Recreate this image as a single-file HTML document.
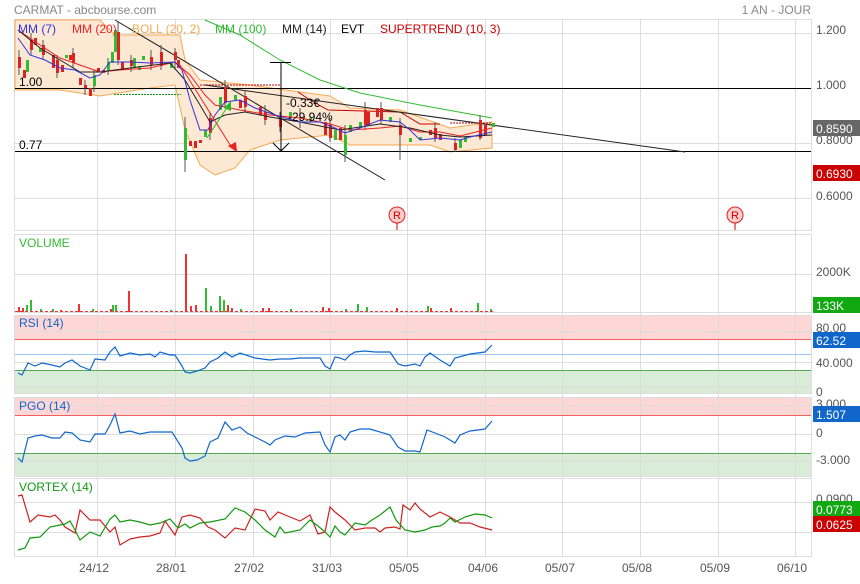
<!DOCTYPE html>
<html><head><meta charset="utf-8"><style>
body{margin:0;background:#fff;width:860px;height:579px;overflow:hidden;font-family:"Liberation Sans",sans-serif}
svg text{font-family:"Liberation Sans",sans-serif}
</style></head><body>
<svg width="860" height="579" viewBox="0 0 860 579" xmlns="http://www.w3.org/2000/svg">
<text x="14" y="14" font-size="12" fill="#888">CARMAT - abcbourse.com</text>
<text x="811" y="14" font-size="12" fill="#888" text-anchor="end">1 AN - JOUR</text>

<g fill="none" stroke="#ddd" stroke-width="1">
<rect x="14.5" y="19.5" width="797" height="211"/>
<rect x="14.5" y="234.5" width="797" height="78"/>
<rect x="14.5" y="315.5" width="797" height="78"/>
<rect x="14.5" y="397.5" width="797" height="79"/>
<rect x="14.5" y="478.5" width="797" height="78"/>
</g>
<rect x="15" y="316" width="796" height="23" fill="#fdd6d6"/>
<rect x="15" y="370" width="796" height="23" fill="#d8ecd8"/>
<rect x="15" y="398" width="796" height="17" fill="#fdd6d6"/>
<rect x="15" y="453" width="796" height="23" fill="#d8ecd8"/>

<g stroke="#ddd" stroke-width="1">
<path d="M97.5 20V557M175.5 20V557M253.5 20V557M330.5 20V557M407.5 20V557M485.5 20V557M562.5 20V557M640.5 20V557M718.5 20V557M795.5 20V557"/>
<path d="M15 33.5H811M15 143.5H811M15 198.5H811M15 274.5H811M15 331.5H811M15 362.5H811M15 386.5H811M15 405.5H811M15 434.5H811M15 461.5H811M15 502.5H811M15 532.5H811"/>
</g>
<line x1="15" y1="339.5" x2="811" y2="339.5" stroke="#f06060"/>
<line x1="15" y1="370.5" x2="811" y2="370.5" stroke="#55aa55"/>
<line x1="15" y1="354.5" x2="811" y2="354.5" stroke="#9cc8f0"/>
<line x1="15" y1="415.5" x2="811" y2="415.5" stroke="#f06060"/>
<line x1="15" y1="453.5" x2="811" y2="453.5" stroke="#55aa55"/>

<path d="M15 20L100 20L115 35L180 35L185 60L200 80L250 85L300 92L330 96L350 108L400 110L450 128L492 122L492 148L450 152L430 145L400 145L350 145L330 135L300 138L280 140L250 150L235 168L215 175L200 165L185 130L175 85L150 88L100 96L60 90L15 90Z" fill="#fde8d4" stroke="#f5a950" stroke-width="1"/>

<line x1="15" y1="88.5" x2="811" y2="88.5" stroke="#000"/>
<line x1="15" y1="151.5" x2="811" y2="151.5" stroke="#000"/>
<text x="19" y="86" font-size="12">1.00</text>
<text x="19" y="149" font-size="12">0.77</text>

<polyline points="205,20 240,35 280,60 320,80 360,93 420,105 492,118" fill="none" stroke="#33bb33"/>
<polyline points="200,85 280,85" fill="none" stroke="#cc0000" stroke-dasharray="2,1"/>
<polyline points="298,92 310,100 328,110 400,112 420,124 440,124" fill="none" stroke="#cc0000"/>
<polyline points="450,123 492,123" fill="none" stroke="#cc0000" stroke-dasharray="2,1"/>
<line x1="114" y1="94.5" x2="181" y2="94.5" stroke="#119911" stroke-dasharray="2,1"/>

<line x1="115" y1="20" x2="385" y2="180" stroke="#222"/>
<line x1="205" y1="85" x2="685" y2="152" stroke="#222"/>

<g stroke="#555" stroke-width="1">
<path d="M19 50V75M31 33V55M43 40V60M57 55V78M73 48V68M85 80V95M94 70V92M108 58V75M118 22V65M131 55V72M151 50V70M161 45V70M175 48V70M185 117V172M210 112V140M225 80V108M245 90V112M265 105V125M280 112V132M300 108V128M330 118V142M345 125V162M365 102V130M381 102V124M400 118V160M435 122V142M455 138V152M480 115V140"/>
</g>
<g fill="#dd2222">
<rect x="18" y="57" width="3" height="11"/><rect x="23" y="70" width="3" height="8"/><rect x="30" y="40" width="3" height="10"/><rect x="34" y="38" width="3" height="7"/><rect x="42" y="45" width="3" height="10"/><rect x="52" y="55" width="3" height="13"/><rect x="56" y="60" width="3" height="13"/><rect x="61" y="65" width="3" height="7"/><rect x="69" y="55" width="3" height="5"/><rect x="72" y="53" width="3" height="10"/><rect x="79" y="78" width="3" height="7"/><rect x="84" y="85" width="3" height="3"/><rect x="89" y="88" width="3" height="8"/><rect x="97" y="68" width="3" height="4"/><rect x="102" y="70" width="3" height="3"/><rect x="117" y="32" width="3" height="28"/><rect x="121" y="62" width="3" height="8"/><rect x="130" y="60" width="3" height="6"/><rect x="150" y="57" width="3" height="8"/><rect x="160" y="52" width="3" height="14"/><rect x="174" y="52" width="3" height="8"/><rect x="177" y="60" width="3" height="8"/>
<rect x="189" y="141" width="3" height="5"/><rect x="194" y="141" width="3" height="7"/><rect x="199" y="140" width="3" height="3"/><rect x="209" y="118" width="3" height="15"/><rect x="224" y="87" width="3" height="16"/><rect x="239" y="100" width="3" height="8"/><rect x="244" y="96" width="3" height="11"/><rect x="259" y="107" width="3" height="8"/><rect x="264" y="112" width="3" height="8"/><rect x="279" y="118" width="3" height="9"/><rect x="324" y="122" width="3" height="13"/><rect x="329" y="125" width="3" height="13"/><rect x="339" y="128" width="3" height="12"/><rect x="364" y="110" width="3" height="15"/><rect x="367" y="112" width="3" height="13"/><rect x="376" y="108" width="3" height="9"/><rect x="380" y="108" width="3" height="12"/><rect x="399" y="125" width="3" height="10"/><rect x="429" y="130" width="3" height="5"/><rect x="434" y="128" width="3" height="10"/><rect x="439" y="134" width="3" height="6"/><rect x="454" y="143" width="3" height="7"/><rect x="479" y="120" width="3" height="18"/><rect x="484" y="125" width="3" height="10"/>
</g>
<g fill="#33bb33">
<rect x="26" y="60" width="3" height="12"/><rect x="39" y="48" width="3" height="4"/><rect x="65" y="55" width="3" height="3"/><rect x="93" y="75" width="3" height="11"/><rect x="107" y="62" width="3" height="8"/><rect x="111" y="52" width="3" height="11"/><rect x="114" y="30" width="3" height="22"/><rect x="133" y="58" width="3" height="10"/><rect x="138" y="66" width="3" height="4"/><rect x="142" y="56" width="3" height="4"/><rect x="170" y="63" width="3" height="5"/>
<rect x="184" y="128" width="3" height="32"/><rect x="204" y="130" width="3" height="7"/><rect x="219" y="97" width="3" height="13"/><rect x="234" y="95" width="3" height="5"/><rect x="289" y="112" width="3" height="6"/><rect x="309" y="118" width="3" height="4"/><rect x="334" y="130" width="3" height="10"/><rect x="344" y="135" width="3" height="20"/><rect x="349" y="125" width="3" height="7"/><rect x="359" y="122" width="3" height="5"/><rect x="389" y="117" width="3" height="5"/><rect x="409" y="138" width="3" height="4"/><rect x="419" y="137" width="3" height="3"/><rect x="459" y="140" width="3" height="8"/><rect x="464" y="137" width="3" height="5"/><rect x="492" y="123" width="3" height="4"/>
</g>

<polyline points="18,30 40,45 60,58 80,65 100,72 120,70 150,68 175,62 190,75 205,95 215,105 240,110 270,115 300,118 330,124 350,130 380,128 400,126 420,132 440,132 460,136 492,128" fill="none" stroke="#ee2222"/>
<polyline points="18,30 40,48 60,60 80,72 100,72 130,68 170,63 185,80 200,105 210,122 225,115 245,112 270,117 300,122 340,130 380,124 410,128 440,135 460,137 492,135" fill="none" stroke="#222"/>
<polyline points="18,38 30,55 45,60 60,68 75,70 90,78 100,75 110,62 130,62 150,63 175,62 182,70 190,100 200,130 208,130 215,115 225,102 240,100 255,108 275,115 300,122 320,122 335,128 345,133 360,128 380,120 400,122 410,130 420,140 440,138 460,140 470,137 492,132" fill="none" stroke="#3333dd"/>

<line x1="180" y1="65" x2="232" y2="148" stroke="#ee2222"/>
<polygon points="228,146 237,152 236,142" fill="#ee2222"/>
<line x1="207" y1="138" x2="228" y2="106" stroke="#22bb22"/>
<polygon points="224,108 231,101 231,111" fill="#22bb22"/>
<g stroke="#000">
<line x1="281" y1="62" x2="281" y2="151"/><line x1="270" y1="62.5" x2="291" y2="62.5"/><line x1="270" y1="151.5" x2="291" y2="151.5"/>
<polyline points="273,143 281,151 289,143" fill="none"/>
</g>
<text x="286" y="107" font-size="12">-0.33€</text>
<text x="288" y="121" font-size="12">-29.94%</text>

<g font-size="12">
<text x="18" y="33" fill="#3333dd">MM (7)</text>
<text x="72" y="33" fill="#ee2222">MM (20)</text>
<text x="132" y="33" fill="#f5a950">BOLL (20, 2)</text>
<text x="215" y="33" fill="#33bb33">MM (100)</text>
<text x="282" y="33" fill="#222">MM (14)</text>
<text x="341" y="33" fill="#000">EVT</text>
<text x="380" y="33" fill="#cc0000">SUPERTREND (10, 3)</text>
</g>
<g font-size="11" text-anchor="middle">
<circle cx="397" cy="215" r="8" fill="#fcc" stroke="#d22"/><text x="397" y="219" fill="#c00">R</text><line x1="397" y1="223" x2="397" y2="230" stroke="#c00"/>
<circle cx="735" cy="215" r="8" fill="#fcc" stroke="#d22"/><text x="735" y="219" fill="#c00">R</text><line x1="735" y1="223" x2="735" y2="230" stroke="#c00"/>
</g>

<g font-size="12" fill="#555">
<text x="816" y="34">1.200</text><text x="816" y="89">1.000</text><text x="816" y="144">0.8000</text><text x="816" y="200">0.6000</text>
<text x="816" y="276">2000K</text>
<text x="816" y="332">80.00</text><text x="816" y="367">40.000</text><text x="816" y="396">0</text>
<text x="816" y="408">3.000</text><text x="816" y="437">0</text><text x="816" y="464">-3.000</text>
<text x="816" y="503">0.0900</text>
</g>
<rect x="813" y="120" width="47" height="16" fill="#666"/><text x="816" y="133" font-size="12" fill="#fff">0.8590</text>
<rect x="813" y="165" width="47" height="16" fill="#c00"/><text x="816" y="178" font-size="12" fill="#fff">0.6930</text>
<rect x="813" y="297" width="47" height="16" fill="#11a811"/><text x="816" y="310" font-size="12" fill="#fff">133K</text>
<rect x="813" y="332" width="47" height="16" fill="#1166cc"/><text x="816" y="345" font-size="12" fill="#fff">62.52</text>
<rect x="813" y="406" width="47" height="16" fill="#1166cc"/><text x="816" y="419" font-size="12" fill="#fff">1.507</text>
<rect x="813" y="501" width="47" height="16" fill="#11a811"/><text x="816" y="514" font-size="12" fill="#fff">0.0773</text>
<rect x="813" y="516" width="47" height="16" fill="#c00"/><text x="816" y="529" font-size="12" fill="#fff">0.0625</text>

<text x="19" y="247" font-size="12" fill="#33bb33">VOLUME</text>
<g fill="#ee3333">
<rect x="18" y="307" width="2" height="5"/><rect x="22" y="308" width="2" height="4"/><rect x="78" y="304" width="2" height="8"/><rect x="128" y="291" width="2" height="21"/><rect x="185" y="254" width="2" height="58"/><rect x="190" y="306" width="2" height="6"/><rect x="195" y="305" width="2" height="7"/><rect x="227" y="305" width="2" height="7"/><rect x="231" y="308" width="2" height="4"/><rect x="262" y="308" width="2" height="4"/><rect x="268" y="308" width="2" height="4"/><rect x="322" y="307" width="2" height="5"/><rect x="328" y="308" width="2" height="4"/><rect x="396" y="308" width="2" height="4"/><rect x="430" y="308" width="2" height="4"/><rect x="450" y="308" width="2" height="4"/><rect x="60" y="310" width="2" height="2"/><rect x="110" y="309" width="2" height="3"/>
</g>
<g fill="#33bb33">
<rect x="26" y="305" width="2" height="7"/><rect x="30" y="300" width="2" height="12"/><rect x="40" y="309" width="2" height="3"/><rect x="52" y="309" width="2" height="3"/><rect x="92" y="309" width="2" height="3"/><rect x="112" y="305" width="2" height="7"/><rect x="115" y="305" width="2" height="7"/><rect x="170" y="310" width="2" height="2"/><rect x="205" y="288" width="2" height="24"/><rect x="210" y="306" width="2" height="6"/><rect x="219" y="296" width="2" height="16"/><rect x="223" y="300" width="2" height="12"/><rect x="240" y="309" width="2" height="3"/><rect x="290" y="309" width="2" height="3"/><rect x="345" y="309" width="2" height="3"/><rect x="357" y="304" width="2" height="8"/><rect x="366" y="307" width="2" height="5"/><rect x="427" y="306" width="2" height="6"/><rect x="477" y="303" width="2" height="9"/><rect x="490" y="309" width="2" height="3"/>
</g>
<line x1="15" y1="311.5" x2="495" y2="311.5" stroke="#ee3333" stroke-dasharray="3,2"/>

<text x="19" y="327" font-size="12" fill="#1166cc">RSI (14)</text>
<polyline points="18,373 22,375 28,363 35,366 42,363 52,365 60,367 65,363 72,360 80,366 90,370 95,359 105,360 110,352 115,347 120,356 130,353 140,355 150,354 155,357 160,352 170,355 175,355 182,366 185,372 190,373 197,371 205,368 210,362 218,358 225,352 232,357 240,353 255,358 270,360 280,359 290,359 300,358 320,358 325,366 330,369 335,357 340,358 345,360 350,355 355,352 365,351 375,352 390,352 398,364 405,366 415,364 420,366 425,357 430,353 440,360 450,366 455,358 470,354 485,352 492,345" fill="none" stroke="#1166cc" stroke-width="1.2"/>

<text x="19" y="410" font-size="12" fill="#1166cc">PGO (14)</text>
<polyline points="18,458 22,462 28,438 35,436 42,435 52,438 60,438 65,432 72,433 80,440 90,442 95,434 105,434 110,425 115,414 120,433 130,431 140,434 150,432 160,432 172,432 182,448 185,458 190,461 197,460 205,456 210,442 218,438 225,422 232,430 240,427 247,433 255,437 265,442 270,445 275,440 285,436 295,437 305,433 320,432 325,445 330,452 335,437 340,435 345,440 350,432 360,429 370,429 390,435 398,447 405,451 415,451 420,452 427,430 435,433 445,437 455,443 460,435 470,431 485,429 492,421" fill="none" stroke="#1166cc" stroke-width="1.2"/>

<text x="19" y="491" font-size="12" fill="#119911">VORTEX (14)</text>
<polyline points="18,496 22,495 30,522 38,515 50,517 55,515 60,520 65,527 75,533 80,510 90,520 100,520 110,532 115,527 120,545 130,539 140,537 150,536 160,533 165,521 175,535 182,517 190,515 200,518 208,527 215,530 225,538 235,528 245,530 255,509 265,511 270,520 278,512 290,517 300,521 310,515 318,534 325,532 330,507 335,512 345,520 355,530 365,528 375,528 380,532 385,528 395,527 400,529 403,505 410,510 415,503 420,509 430,517 440,512 450,517 460,523 470,523 480,527 492,530" fill="none" stroke="#cc2222" stroke-width="1.2"/>
<polyline points="18,550 25,548 30,538 40,537 50,527 60,525 65,524 70,521 75,530 80,540 90,532 100,536 110,519 115,515 120,522 130,520 140,522 150,525 160,523 170,519 178,528 185,524 190,528 200,523 210,522 225,519 235,508 245,512 255,520 265,530 275,537 280,527 285,533 300,530 310,520 318,526 325,532 330,537 335,526 340,532 345,535 355,523 365,525 372,520 380,515 390,507 396,520 405,530 415,532 425,530 432,527 440,526 445,523 450,518 455,522 465,517 475,514 485,515 492,518" fill="none" stroke="#119911" stroke-width="1.2"/>

<g font-size="12" fill="#555" text-anchor="middle">
<text x="94" y="572">24/12</text><text x="171" y="572">28/01</text><text x="249" y="572">27/02</text><text x="327" y="572">31/03</text><text x="404" y="572">05/05</text><text x="483" y="572">04/06</text><text x="560" y="572">05/07</text><text x="637" y="572">05/08</text><text x="715" y="572">05/09</text><text x="792" y="572">06/10</text>
</g>
</svg>
</body></html>
